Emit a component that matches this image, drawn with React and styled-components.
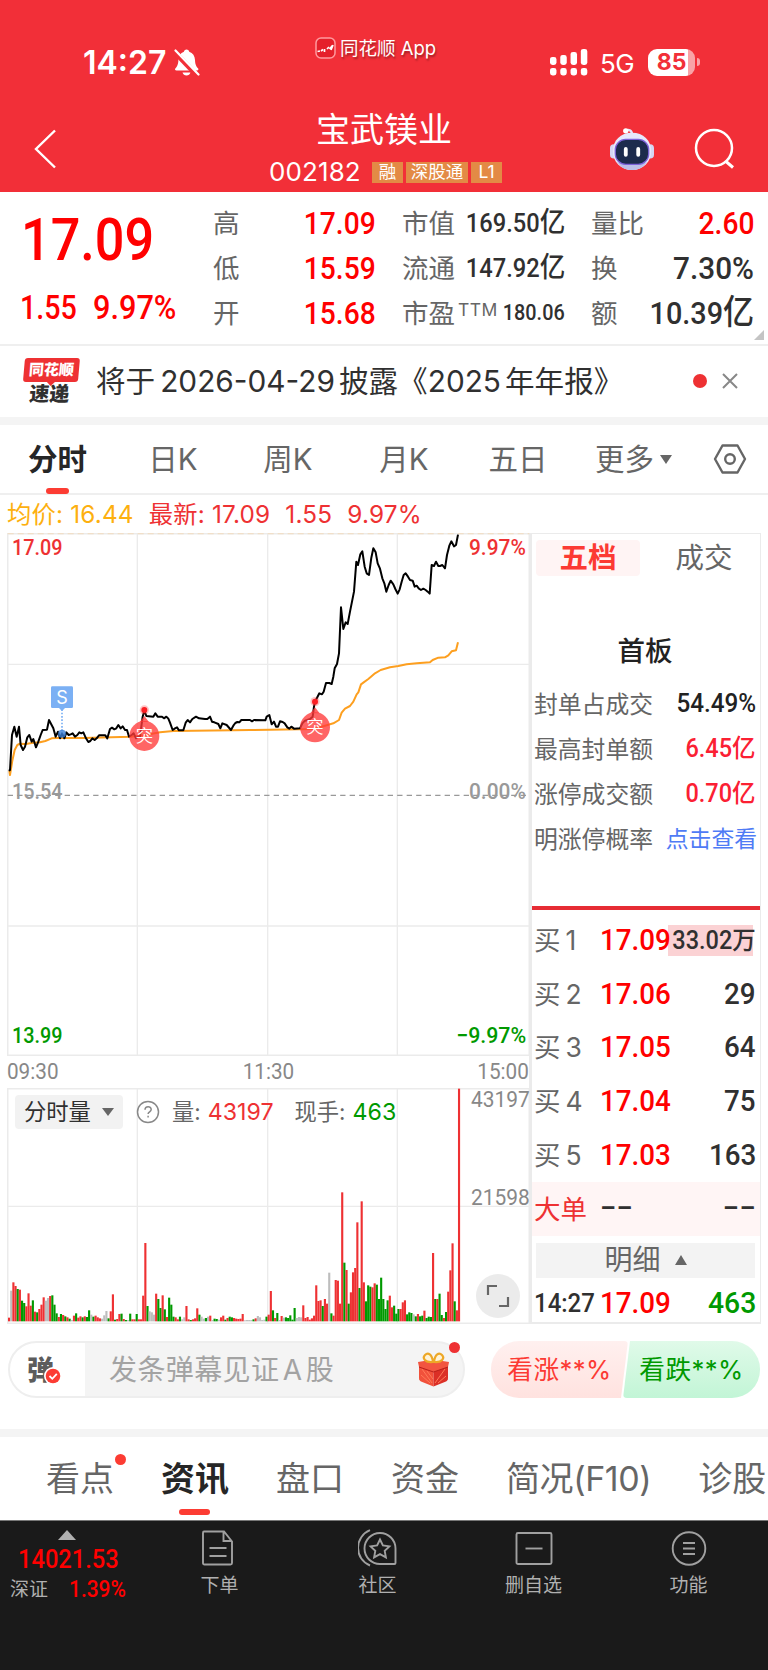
import React from 'react';
import styled, { createGlobalStyle, css } from 'styled-components';

const GlobalStyle = createGlobalStyle`
  * {
    box-sizing: border-box;
  }

  body {
    margin: 0;
    background: #fff;
    font-family: Inter, "Noto Sans CJK SC", sans-serif;
    color: #303030;
  }
`;

const RED = '#ff0000';
const SOFT_RED = '#ee3133';
const GREEN = '#009900';
const DARK = '#303030';
const GREY = '#666';
const LINE = '#ebebeb';

/* ---------- data ---------- */

const quoteRows = [
  [
    { label: '高', value: '17.09', color: RED, size: 32 },
    { label: '市值', value: '169.50', unit: '亿', size: 26, squeeze: 0.91 },
    { label: '量比', value: '2.60', color: RED, size: 32 },
  ],
  [
    { label: '低', value: '15.59', color: RED, size: 32 },
    { label: '流通', value: '147.92', unit: '亿', size: 26, squeeze: 0.91 },
    { label: '换', value: '7.30%', size: 32, squeeze: 0.93 },
  ],
  [
    { label: '开', value: '15.68', color: RED, size: 32 },
    { label: '市盈', sup: 'TTM', value: '180.06', size: 22, squeeze: 0.9 },
    { label: '额', value: '10.39', unit: '亿', size: 32, squeeze: 0.9 },
  ],
];

const periods = [
  { text: '分时', width: 115, active: true },
  { text: '日K', width: 116 },
  { text: '周K', width: 114 },
  { text: '月K', width: 118 },
  { text: '五日', width: 110 },
];

const limitStats = [
  { label: '封单占成交', value: '54.49%', color: '#222', squeeze: 0.97 },
  { label: '最高封单额', value: '6.45亿', color: '#fb2033', squeeze: 0.94 },
  { label: '涨停成交额', value: '0.70亿', color: '#fb2033', squeeze: 0.94 },
  { label: '明涨停概率', value: '点击查看', link: true },
];

const bids = [
  { level: 1, price: '17.09', amount: '33.02万', filled: true },
  { level: 2, price: '17.06', amount: '29' },
  { level: 3, price: '17.05', amount: '64' },
  { level: 4, price: '17.04', amount: '75' },
  { level: 5, price: '17.03', amount: '163' },
];

const newsTabs = [
  { text: '看点', dot: true },
  { text: '资讯', active: true },
  { text: '盘口' },
  { text: '资金' },
  { text: '简况(F10)', tight: true },
  { text: '诊股' },
];

const pricePoints = `26,752 30,750 36,645 43,620 50,650 57,620 62,675 69,690 75,680 82,652 88,645 95,665 100,657
  108,682 115,665 122,645 128,630 141,629 147,600 160,625 167,650 174,635 180,655 186,640 193,655 199,637 206,645
  212,643 218,640 225,650 232,645 238,637 244,640 250,637 258,655 265,666 271,663 277,655 284,660 290,655 297,646
  316,646 322,655 330,627 336,623 343,628 349,625 355,615 362,625 368,619 375,630 381,630 387,650 395,645 401,640
  408,655 414,650 420,650 428,590 433,572 439,588 460,590 466,580 473,590 486,590 492,595 499,590 505,596 510,608
  518,630 525,625 531,622 537,631 550,631 557,608 563,600 570,607 577,597 588,590 597,595 615,597 622,597 630,590
  636,605 643,607 655,612 661,625 667,610 680,615 693,630 700,617 706,609 712,606 718,607 724,600 750,600 756,604
  762,600 796,601 800,590 808,585 815,613 822,605 828,620 834,620 840,604 848,606 854,610 862,622 868,626 874,620
  882,626 900,625 907,610 915,602 922,600 930,597 938,590 942,560 945,545 958,520 966,523 971,515 978,489 988,489
  995,492 1000,470 1004,445 1011,432 1017,400 1023,262 1030,327 1037,307 1043,312 1050,275 1062,215 1069,125
  1074,135 1081,103 1087,94 1094,140 1100,160 1107,165 1114,113 1120,85 1127,97 1133,130 1140,146 1147,175
  1153,190 1159,215 1166,195 1172,182 1180,193 1186,207 1193,221 1199,208 1205,185 1211,165 1217,160 1224,170
  1230,180 1238,182 1244,200 1250,197 1256,205 1263,210 1270,206 1277,210 1283,215 1289,221 1295,135 1302,138
  1308,125 1315,138 1320,138 1327,135 1335,145 1341,105 1348,77 1354,64 1362,79 1368,75 1374,44`;

const averagePoints = `28,752 30,765 37,722 44,690 52,675 60,671 77,672 100,668 120,667 136,663 155,655 170,654
  250,654 390,650 433,646 480,637 520,633 700,631 750,630 810,629 900,628 940,627 975,617 1000,610 1017,600
  1025,578 1035,566 1050,558 1060,545 1070,523 1075,517 1083,493 1090,488 1105,477 1125,460 1142,450 1170,442
  1195,438 1220,433 1250,430 1290,427 1298,420 1315,413 1335,412 1345,406 1355,394 1368,391 1374,367`;

// one entry per minute: r = up, g = down, x = flat
const volumes = `r11 x92 r117 r106 g97 r95 g62 g55 r45 r84 r47 g63 r29 g27 r37 r50 r72 x62 x70 r76 g78 g50 g24 r13
  g22 r19 g15 r12 g8 x4 r17 g24 r11 r15 g12 r15 g13 g33 x20 g14 r17 r12 r9 x8 x18 x31 g9 r30 r81 g5 r7 r22 g23 r7
  g4 x4 g23 r6 r6 g22 r6 r6 r77 r235 g46 x30 x27 x20 r83 g67 g40 r78 g36 r13 g71 g50 g14 r12 r6 g14 x6 x12 r46 r6
  g4 r6 r9 r39 g20 x14 x8 g10 x14 r17 x4 g8 g7 x5 r12 r17 g5 r10 g14 g12 r10 r8 r7 r8 r22 x3 x4 x4 x4 g6 r9 x16
  x12 x4 x5 g14 r20 r91 g33 r10 g25 x4 r16 x11 g12 g10 g18 g5 g40 x10 x13 x12 r48 r10 r13 r5 r9 r17 r108 r61 r63
  g46 r67 r53 x146 g24 r17 r124 r122 r53 r387 g176 r154 g53 r87 r147 r160 r297 g100 r360 r117 g60 g108 g104 r102
  r114 g110 g67 g131 g67 g37 g63 r77 r42 g47 g23 g37 r37 r57 r63 g21 g27 g25 x21 g15 r22 g15 g17 r32 g10 g14 g13
  r205 g67 r67 g83 g19 r10 g28 r89 r153 r234 g60 r33 r698`.split(/\s+/);

const volumeColors = { r: '#ee3133', g: '#009900', x: '#bdbdbd' };

/* ---------- shared ---------- */

const Screen = styled.div`
  width: 768px;
  height: 1670px;
  overflow: hidden;
  display: flex;
  flex-direction: column;
`;

// narrow numerals, squeezed towards the side they are aligned to
const Num = styled.span`
  display: inline-block;
  flex: none;
  font-family: Roboto, "Noto Sans CJK SC", sans-serif;
  font-weight: ${({ $weight }) => $weight || 500};
  font-size: ${({ $size }) => $size}px;
  line-height: 1;
  color: ${({ $color }) => $color || DARK};
  white-space: nowrap;
  transform: scaleX(${({ $squeeze }) => $squeeze || 0.88});
  transform-origin: ${({ $from }) => $from || 'left'} center;
`;

const Dot = styled.i`
  flex: none;
  width: ${({ $size }) => $size}px;
  height: ${({ $size }) => $size}px;
  border-radius: 50%;
  background: ${SOFT_RED};
`;

const Band = styled.div`
  flex: none;
  height: 8px;
  background: #f4f4f4;
`;

/* ---------- header ---------- */

const Header = styled.header`
  flex: none;
  height: 192px;
  background: #f22f38;
  color: #fff;
`;

const StatusBar = styled.div`
  height: 104px;
  padding: 36px 68px 0 83px;
  display: flex;
  justify-content: space-between;
`;

const Clock = styled.div`
  width: 232px;
  height: 52px;
  display: flex;
  align-items: center;
  gap: 7px;
  font-size: 32px;
  font-weight: 600;
`;

const AppTag = styled.div`
  height: 24px;
  display: flex;
  align-items: center;
  gap: 4px;
  font-size: 18.5px;
  line-height: 24px;
  text-shadow: 1px 2px 2px rgba(0, 0, 0, 0.35);
`;

const Signals = styled.div`
  width: 150px;
  height: 52px;
  margin-left: auto;
  display: flex;
  align-items: center;
  font-size: 26px;
`;

const Network = styled.span`
  margin: 2px 14px 0 12px;
  letter-spacing: -0.5px;
`;

const Battery = styled.div`
  width: 47px;
  height: 27px;
  border-radius: 9px;
  background: linear-gradient(90deg, #fff 86%, #f9a3a7 86%);
  color: #f22f38;
  font-size: 23px;
  font-weight: 700;
  line-height: 27px;
  text-align: center;
`;

const BatteryCap = styled.i`
  width: 3px;
  height: 8px;
  margin-left: 2px;
  border-radius: 0 3px 3px 0;
  background: #f9a3a7;
`;

const NavBar = styled.div`
  height: 88px;
  display: grid;
  grid-template-columns: 200px 368px 200px;
`;

const BackCell = styled.div`
  padding: 25px 0 0 34px;
`;

const StockName = styled.h1`
  margin: 6px 0 0;
  font-size: 34px;
  font-weight: 400;
  line-height: 40px;
  text-align: center;
`;

const StockMeta = styled.div`
  margin-top: 8px;
  display: flex;
  align-items: center;
  padding-left: 69px;
`;

const StockCode = styled.span`
  width: 103px;
  font-size: 26px;
  line-height: 28px;
  letter-spacing: 0.1px;
`;

const Tag = styled.span`
  flex: none;
  width: ${({ $width }) => $width}px;
  height: 21px;
  margin-right: 3px;
  background: #e38a45;
  font-size: 17.5px;
  line-height: 20px;
  text-align: center;
`;

const NavActions = styled.div`
  display: flex;
  align-items: flex-start;
  padding-top: 23px;
  padding-left: 41px;
  gap: 39px;
`;

/* ---------- quote ---------- */

const Quote = styled.section`
  flex: none;
  height: 154px;
  border-bottom: 2px solid #efefef;
  display: flex;
  position: relative;
`;

const MainQuote = styled.div`
  width: 213px;
  padding: 18px 0 0 21px;
`;

const Change = styled.div`
  margin: 21px 0 0 -1px;
  display: flex;
  gap: 8px;
`;

const QuoteGrid = styled.div`
  flex: 1;
  padding: 9px 14px 10px 0;
  display: grid;
  grid-template-columns: 163px 163px 163px;
  grid-template-rows: repeat(3, 44.7px);
  column-gap: 26px;
`;

const QuoteCell = styled.div`
  display: flex;
  align-items: center;
  justify-content: space-between;
`;

const Label = styled.span`
  color: ${GREY};
  font-size: 26.5px;
  line-height: 40px;
  white-space: nowrap;

  sup {
    font-size: 17.5px;
    line-height: 0;
    letter-spacing: 0.5px;
    vertical-align: 7px;
    margin: 0 -10px 0 3px;
  }
`;

const Unit = styled.span`
  font-size: 1.08em;
`;

const Corner = styled.i`
  position: absolute;
  right: 4px;
  bottom: 4px;
  border-left: 10px solid transparent;
  border-bottom: 10px solid #c4c4c4;
`;

/* ---------- notice ---------- */

const Notice = styled.section`
  flex: none;
  height: 71px;
  padding: 0 28px 2px 23px;
  display: flex;
  align-items: center;
`;

const Express = styled.div`
  flex: none;
  width: 55px;
  height: 46px;
  margin-right: 18px;
  transform: skewX(-5deg);
  text-align: center;
  font-weight: 900;
`;

const ExpressTop = styled.div`
  height: 24px;
  border-radius: 3px;
  background: ${SOFT_RED};
  color: #fff;
  font-size: 15px;
  line-height: 23px;
`;

const ExpressTip = styled.div`
  width: 0;
  margin: 0 auto;
  border: 4px solid transparent;
  border-top: 4px solid ${SOFT_RED};
  border-bottom: 0;
`;

const ExpressBottom = styled.div`
  font-size: 20px;
  line-height: 17px;
`;

const NoticeText = styled.span`
  flex: 1;
  font-size: 29.6px;
  line-height: 40px;
  white-space: nowrap;

  b {
    font-weight: 400;
    font-size: 29.8px;
    margin: 0 4px 0 5px;
  }

  b.year {
    margin-left: 0;
  }
`;

/* ---------- period tabs ---------- */

const PeriodTabs = styled.nav`
  flex: none;
  height: 70px;
  border-bottom: 2px solid #efefef;
  display: flex;
  align-items: center;
  font-size: 29.5px;
  line-height: 60px;
  color: ${GREY};
`;

const Period = styled.span`
  flex: none;
  width: ${({ $width }) => $width}px;
  height: 69px;
  line-height: 68px;
  text-align: center;
  position: relative;

  ${({ $active }) => $active && css`
    color: #262626;
    font-weight: 700;

    &::after {
      content: '';
      position: absolute;
      left: 46px;
      bottom: 0;
      width: 23px;
      height: 6px;
      border-radius: 3px;
      background: #fc3c33;
    }
  `}
`;

const MorePeriod = styled.span`
  width: 140px;
  padding-left: 22px;
  display: flex;
  align-items: center;
  gap: 6px;
`;

const Caret = styled.i`
  border: ${({ $w }) => $w}px solid transparent;
  ${({ $up, $w, $h, $color }) => ($up
    ? `border-top: 0; border-bottom: ${$h}px solid ${$color || GREY};`
    : `border-bottom: 0; border-top: ${$h}px solid ${$color || GREY};`)}
`;

/* ---------- chart ---------- */

const Summary = styled.div`
  flex: none;
  height: 38px;
  padding: 0 7px;
  display: flex;
  font-size: 24.3px;
  line-height: 39px;
  color: ${SOFT_RED};
  letter-spacing: 0.2px;

  span {
    margin-right: 15px;
  }

  span:first-child {
    color: #fdb00f;
  }
`;

const Market = styled.section`
  flex: none;
  height: 791px;
  margin: 0 7px;
  display: flex;
`;

const Charts = styled.div`
  flex: none;
  width: 522px;
`;

const PriceChart = styled.div`
  height: 523px;
  position: relative;

  svg {
    display: block;
  }
`;

const AxisLabel = styled(Num)`
  position: absolute;
  ${({ $from, $edge }) => ($from === 'right' ? `right: ${$edge ?? 3}px;` : 'left: 5px;')}
  top: ${({ $top }) => $top}px;
`;

const Times = styled.div`
  height: 32px;
  display: flex;
  align-items: center;
  justify-content: space-between;
`;

const VolumeChart = styled.div`
  height: 236px;
  position: relative;

  svg {
    display: block;
  }
`;

const VolumeHead = styled.div`
  position: absolute;
  left: 8px;
  top: 7px;
  display: flex;
  align-items: center;
  font-size: 22.3px;
  line-height: 34px;
  color: ${GREY};
  white-space: nowrap;
`;

const VolumeSelect = styled.span`
  width: 108px;
  height: 34px;
  margin-right: 13px;
  padding-left: 9px;
  display: flex;
  align-items: center;
  gap: 11px;
  border-radius: 4px;
  background: #f2f2f2;
  color: ${DARK};
`;

const VolumeLabel = styled.span`
  margin-left: ${({ $gap }) => $gap}px;
`;

const VolumeValue = styled.span`
  margin-left: 7px;
  font-size: 23.2px;
  color: ${({ $color }) => $color};
`;

const Expand = styled.span`
  position: absolute;
  right: 9px;
  bottom: 6px;
  width: 44px;
  height: 44px;
  border-radius: 50%;
  background: #ebebeb;
  display: flex;
  align-items: center;
  justify-content: center;
`;

/* ---------- order book ---------- */

const Book = styled.div`
  width: 232px;
  border: 1px solid ${LINE};
  border-left-width: 3px;
  border-bottom-width: 2px;
  display: flex;
  flex-direction: column;
`;

const BookTabs = styled.div`
  flex: none;
  height: 47px;
  padding: 6px 0 0 4px;
  display: flex;
`;

const BookTab = styled.span`
  flex: none;
  width: 104px;
  height: 36px;
  margin-right: 12px;
  border-radius: 4px;
  font-size: 28.5px;
  line-height: 36px;
  text-align: center;
  color: ${GREY};

  ${({ $active }) => $active && css`
    background: #fff4f4;
    color: #fc3a33;
    font-weight: 700;
  `}
`;

const BoardTitle = styled.h2`
  flex: none;
  margin: 49px 2px 8px 0;
  font-size: 27.5px;
  font-weight: 500;
  line-height: 43px;
  text-align: center;
  color: #222;
`;

const StatRow = styled.div`
  flex: none;
  height: 45.2px;
  padding: 0 4px 0 2px;
  display: flex;
  align-items: center;
  justify-content: space-between;
  font-size: 23.8px;
  color: ${GREY};
  white-space: nowrap;
`;

const StatLabel = styled.span`
  margin-top: -3px;
`;

const Link = styled.span`
  margin: -3px -1px 0 0;
  font-size: 22.8px;
  color: #4f7bf5;
`;

const BookDivider = styled.div`
  flex: none;
  height: 4px;
  margin-top: 44px;
  margin-bottom: 4px;
  background: #e62c34;
`;

const BookRow = styled.div`
  flex: none;
  height: 53.7px;
  padding: 0 4px 0 2px;
  display: grid;
  grid-template-columns: 66px minmax(0, 1fr) auto;
  align-items: center;
  font-size: 26.5px;
  line-height: 36px;
  color: ${({ $color }) => $color || GREY};
  white-space: nowrap;
  ${({ $tint }) => $tint && `background: ${$tint};`}
  ${({ $filled }) => $filled && css`
    background: linear-gradient(#fbd2d4, #fbd2d4) 136px 11px / 85px 31px no-repeat;
  `}
`;

const TradeRow = styled(BookRow)`
  height: 44px;
  padding-top: 8px;
`;

const Level = styled.span`
  display: flex;
  align-items: center;
  gap: 5px;
  margin-top: -1px;
`;

const Detail = styled.div`
  flex: none;
  height: 35px;
  margin: 7px 5px 0 4px;
  display: flex;
  align-items: center;
  justify-content: center;
  gap: 14px;
  background: #f3f3f3;
  font-size: 28px;
  line-height: 35px;
  color: ${GREY};
`;

/* ---------- comment bar ---------- */

const CommentBar = styled.section`
  flex: none;
  height: 105px;
  padding: 17px 8px 0;
  display: flex;
  align-items: flex-start;
`;

const Bullet = styled.div`
  flex: none;
  width: 457px;
  height: 57px;
  margin-right: 26px;
  border: 2px solid #eee;
  border-radius: 29px;
  background: linear-gradient(90deg, #fff 75px, #f4f4f4 75px);
  display: flex;
  align-items: center;
  position: relative;
`;

const BulletMark = styled.span`
  width: 82px;
  padding: 0 0 2px 17px;
  display: flex;
  font-size: 27px;
  font-weight: 900;
  color: #5c5c5c;

  svg {
    margin: 18px 0 0 -10px;
  }
`;

const Placeholder = styled.span`
  flex: 1;
  padding-left: 17px;
  font-size: 28px;
  line-height: 52px;
  letter-spacing: 0.4px;
  word-spacing: -5px;
  color: #a3a3a3;
`;

const BulletDot = styled(Dot)`
  position: absolute;
  right: 3px;
  top: -1px;
`;

const Gift = styled.svg`
  margin-right: 13px;
`;

const Vote = styled.span`
  flex: none;
  width: 137px;
  height: 57px;
  padding-bottom: 4px;
  display: flex;
  align-items: center;
  justify-content: center;
  font-size: 25.7px;
  letter-spacing: 0.4px;
  white-space: nowrap;

  ${({ $up }) => ($up ? css`
    border-radius: 28px 4px 4px 28px;
    background: linear-gradient(#fff0ef, #ffe2df);
    clip-path: polygon(0 0, 100% 0, 130px 100%, 0 100%);
    color: #fc3a33;
  ` : css`
    margin-left: -5px;
    border-radius: 4px 28px 28px 4px;
    background: linear-gradient(#e0fae9, #c2f5d6);
    clip-path: polygon(7px 0, 100% 0, 100% 100%, 0 100%);
    color: ${GREEN};
  `)}
`;

/* ---------- bottom ---------- */

const NewsTabs = styled.nav`
  flex: none;
  height: 83px;
  padding-left: 46px;
  display: flex;
  gap: 47px;
  overflow: hidden;
`;

const NewsTab = styled.span`
  flex: none;
  height: 83px;
  font-size: 34px;
  line-height: 84px;
  letter-spacing: ${({ $tight }) => ($tight ? '-0.4px' : 'normal')};
  white-space: nowrap;
  color: ${GREY};
  position: relative;

  ${({ $active }) => $active && css`
    font-weight: 700;
    color: #262626;

    &::after {
      content: '';
      position: absolute;
      left: 18px;
      bottom: 5px;
      width: 31px;
      height: 6px;
      border-radius: 3px;
      background: #fc3c33;
    }
  `}
`;

const TabDot = styled(Dot)`
  position: absolute;
  right: -12px;
  top: 17px;
  background: #fc3c33;
`;

const BottomBar = styled.footer`
  flex: 1;
  border-top: 1px solid #777;
  background: #1a1a1a;
  color: #b0b0b0;
  display: grid;
  grid-template-columns: 140px 159px 157px 155px 155px;
  align-items: start;
`;

const IndexBox = styled.div`
  padding: 9px 0 0 10px;
  display: flex;
  flex-direction: column;
`;

const IndexCaret = styled(Caret)`
  width: 0;
  margin-left: 48px;
`;

const IndexLine = styled.div`
  margin-top: 6px;
  display: flex;
  align-items: center;
  gap: 21px;
  font-size: 19px;
  line-height: 24px;
`;

const IndexValue = styled(Num)`
  margin: 6px 0 0 8px;
`;

const Action = styled.div`
  padding-top: 8px;
  display: flex;
  flex-direction: column;
  align-items: center;
  gap: 5px;
  font-size: 19px;
  line-height: 28px;
`;

/* ---------- icons ---------- */

const BellOff = () => (
  <svg width="27" height="29" viewBox="0 0 27 29">
    <path
      d="M13.5 1.500c1.600 0 2.500 1 2.700 2.200 3.700 1.200 5.600 4.300 5.800 8.200.2 5 1.400 6.300 3 8.400.9 1.200.3 2.200-1 2.200H3.500c-1.400 0-2-1-1-2.200 1.500-2 2.700-3.400 2.900-8.400.2-3.900 2-7 5.500-8.200.3-1.200 1.200-2.200 2.600-2.200z"
      fill="#fff"
    />
    <path d="M9.500 24.500h8c-.6 2-2 3-4 3s-3.400-1-4-3z" fill="#fff" />
    <path d="M1 3.500l23 24" stroke="#f22f38" strokeWidth="5" />
    <path d="M2.500 2.500l23 24" stroke="#fff" strokeWidth="2.200" strokeLinecap="round" />
  </svg>
);

const AppLogo = () => (
  <svg width="21" height="22" viewBox="0 0 21 22">
    <rect x="1" y="1" width="19" height="20" rx="5" fill="#e5202b" stroke="#ff9a9e" strokeWidth="1.500" />
    <path d="M2.500 14.500l2.500-.5M6 14l2-1.500M9.500 12v3M12 12l2-2M14.500 12l3-3.500M16 13l2-5" stroke="#fff" strokeWidth="1.700" fill="none" />
  </svg>
);

const Bars = () => (
  <svg width="38" height="27" viewBox="0 0 38 27" fill="#fff">
    {[8, 6, 3, 0].map((top, i) => (
      <React.Fragment key={top}>
        <rect x={i * 10.300} y={top} width="6.500" height={16 - top} rx="2.500" />
        <rect x={i * 10.300} y="19" width="6.500" height="7.500" rx="2.500" />
      </React.Fragment>
    ))}
  </svg>
);

const Robot = () => (
  <svg width="46" height="44" viewBox="0 0 48 46">
    <path d="M17 4c3-2 7-1 7 4" stroke="#e4e6fb" strokeWidth="2.500" fill="none" />
    <circle cx="17.500" cy="4" r="2.800" fill="#fff" />
    <rect x="1" y="18" width="8" height="15" rx="4" fill="#d5d6f3" />
    <rect x="39" y="18" width="8" height="15" rx="4" fill="#d5d6f3" />
    <path d="M24 6c12 0 20 8 20 19S36 45 24 45 4 36 4 25 12 6 24 6z" fill="#e6e8fb" />
    <path d="M8 36c4 6 9 9 16 9s12-3 16-9c-4 4-28 4-32 0z" fill="#bcbfe8" />
    <rect x="6.500" y="13" width="35" height="26" rx="11" fill="#1c2b4d" stroke="#7d62d9" strokeWidth="1.300" />
    <rect x="15.500" y="21" width="4" height="10" rx="2" fill="#fff" />
    <rect x="28.500" y="21" width="4" height="10" rx="2" fill="#fff" />
  </svg>
);

const GiftIcon = () => (
  <Gift width="33" height="36" viewBox="0 0 33 36">
    <path d="M2 13v13c0 2 1 3 2 3.500l12.500 5V17z" fill="#f1513b" />
    <path d="M31 13v13c0 2-1 3-2 3.500l-12.500 5V17z" fill="#db2f26" />
    <path d="M1 10l15-2.500L32 10l-1 5-14.500 5L2 15z" fill="#f25540" />
    <path d="M2 15l14.500 5L31 15" stroke="#b91f1a" fill="none" />
    <path d="M5 17l10 14M4 23l9 8M10 19l6 8M28 17L18 31M29 24l-8 7" stroke="#ff7a58" strokeWidth="1" fill="none" />
    <path d="M16 10C8 11 5 6 8 3s7-1 8 7zM17 10c8 1 11-4 8-7s-7-1-8 7z" fill="#fff3d6" stroke="#eda827" strokeWidth="2.200" />
  </Gift>
);

const Marker = ({ x, y, dotY }) => (
  <g>
    <path d={`M${x - 14} ${y - 42}L${x} ${y - 60}L${x + 14} ${y - 42}z`} fill="#ff3a3a" fillOpacity="0.78" />
    <circle cx={x} cy={y} r="45" fill="#ff3a3a" fillOpacity="0.78" />
    <circle cx={x} cy={dotY} r="14" fill="#ff3a3a" fillOpacity="0.3" />
    <circle cx={x} cy={dotY} r="9" fill="#fb1f24" />
    <text x={x} y={y + 18} fontSize="52" fontWeight="350" fontFamily="Noto Sans CJK SC" fill="#fff" textAnchor="middle">突</text>
  </g>
);

const PriceLines = () => (
  <svg width="523" height="523" viewBox="21 39 1569 1569" fill="none">
    <g stroke={LINE} strokeWidth="4">
      <path d="M412 41V1606M803 41V1606M1192 41V1606M23 433H1588M23 1218H1588" strokeWidth="4" />
      <path d="M23 41V1606H1588V41z" strokeWidth="5" />
    </g>
    <path d="M23 40H1588" stroke="#f1dfc8" strokeWidth="5" strokeDasharray="18 12" />
    <path d="M23 826H1586" stroke="#999" strokeWidth="4" strokeDasharray="16 12.500" />
    <polyline points={averagePoints} stroke="#fd9f1f" strokeWidth="6" strokeLinejoin="round" />
    <polyline points={pricePoints} stroke="#000" strokeWidth="6" strokeLinejoin="round" />
    <path d="M186 568V640" stroke="#7bb0f4" strokeWidth="5" strokeDasharray="5 5" />
    <circle cx="186" cy="641" r="12" fill="#3b80d8" fillOpacity="0.8" />
    <path d="M157 499h58q4 0 4 4v57q0 4-4 4h-20l-9 9-9-9h-20q-4 0-4-4v-57q0-4 4-4z" fill="#7bb0f4" />
    <text x="186" y="551" fontSize="54" fontFamily="Inter" fill="#fff" textAnchor="middle">S</text>
    <Marker x={433} y={648} dotY={570} />
    <Marker x={945} y={622} dotY={545} />
  </svg>
);

const VolumeBars = () => (
  <svg width="523" height="236" viewBox="21 204 1569 708" fill="none">
    <path d="M412 206V912M803 206V912M1192 206V912M23 559H1588" stroke={LINE} strokeWidth="4" />
    <path d="M23 206V910H1588V206z" stroke={LINE} strokeWidth="5" />
    {volumes.map((v, i) => {
      const height = Number(v.slice(1));
      return (
        <rect key={i} x={24 + i * 6.490} y={904 - height} width="6.400" height={height} fill={volumeColors[v[0]]} />
      );
    })}
  </svg>
);

/* ---------- page ---------- */

const App = () => (
  <Screen>
    <GlobalStyle />

    <Header>
      <StatusBar>
        <Clock>14:27<BellOff /></Clock>
        <AppTag><AppLogo />同花顺 App</AppTag>
        <Signals>
          <Bars />
          <Network>5G</Network>
          <Battery>85</Battery>
          <BatteryCap />
        </Signals>
      </StatusBar>
      <NavBar>
        <BackCell>
          <svg width="23" height="40" viewBox="0 0 23 40">
            <path d="M21 1.500L2 20l19 18.500" stroke="#fff" strokeWidth="2.400" fill="none" />
          </svg>
        </BackCell>
        <div>
          <StockName>宝武镁业</StockName>
          <StockMeta>
            <StockCode>002182</StockCode>
            <Tag $width={31}>融</Tag>
            <Tag $width={62}>深股通</Tag>
            <Tag $width={31}>L1</Tag>
          </StockMeta>
        </div>
        <NavActions>
          <Robot />
          <svg width="42" height="42" viewBox="0 0 42 42" fill="none" stroke="#fff" strokeWidth="2.500">
            <circle cx="20" cy="21" r="18" />
            <path d="M32 34.500l7 6" strokeWidth="3" />
          </svg>
        </NavActions>
      </NavBar>
    </Header>

    <Quote>
      <MainQuote>
        <Num $size={60} $squeeze={0.87} $color={RED}>17.09</Num>
        <Change>
          <Num $size={33} $squeeze={0.87} $color={RED}>1.55</Num>
          <Num $size={33} $squeeze={0.93} $color={RED}>9.97%</Num>
        </Change>
      </MainQuote>
      <QuoteGrid>
        {quoteRows.flat().map((cell) => (
          <QuoteCell key={cell.label}>
            <Label>{cell.label}{cell.sup && <sup>{cell.sup}</sup>}</Label>
            <Num $size={cell.size} $color={cell.color} $squeeze={cell.squeeze} $from="right">
              {cell.value}{cell.unit && <Unit>{cell.unit}</Unit>}
            </Num>
          </QuoteCell>
        ))}
      </QuoteGrid>
      <Corner />
    </Quote>

    <Notice>
      <Express>
        <ExpressTop>同花顺</ExpressTop>
        <ExpressTip />
        <ExpressBottom>速递</ExpressBottom>
      </Express>
      <NoticeText>将于<b>2026-04-29</b>披露《<b className="year">2025</b>年年报》</NoticeText>
      <Dot $size={14} />
      <svg width="33" height="16" viewBox="-17 0 33 16" stroke="#888" strokeWidth="2">
        <path d="M-1 1l14 14M13 1l-14 14" />
      </svg>
    </Notice>

    <Band />

    <PeriodTabs>
      {periods.map((p) => (
        <Period key={p.text} $width={p.width} $active={p.active}>{p.text}</Period>
      ))}
      <MorePeriod>更多<Caret $w={6} $h={9} /></MorePeriod>
      <svg width="34" height="30" viewBox="0 0 34 30" fill="none" stroke={GREY} strokeWidth="2.400">
        <path d="M9.500 1.500h15l7.500 13.500-7.500 13.500h-15L2 15z" strokeLinejoin="round" />
        <circle cx="17" cy="15" r="4.800" />
      </svg>
    </PeriodTabs>

    <Summary>
      <span>均价: 16.44</span>
      <span>最新: 17.09</span>
      <span>1.55</span>
      <span>9.97%</span>
    </Summary>

    <Market>
      <Charts>
        <PriceChart>
          <PriceLines />
          <AxisLabel $size={22} $squeeze={0.9} $color={SOFT_RED} $top={4}>17.09</AxisLabel>
          <AxisLabel $size={22} $squeeze={0.95} $color={SOFT_RED} $top={4} $from="right">9.97%</AxisLabel>
          <AxisLabel $size={22} $squeeze={0.9} $color="#999" $top={248}>15.54</AxisLabel>
          <AxisLabel $size={22} $squeeze={0.95} $color="#999" $top={248} $from="right">0.00%</AxisLabel>
          <AxisLabel $size={22} $squeeze={0.9} $color={GREEN} $top={492}>13.99</AxisLabel>
          <AxisLabel $size={22} $squeeze={0.97} $color={GREEN} $top={492} $from="right">−9.97%</AxisLabel>
        </PriceChart>
        <Times>
          <Num $size={22} $squeeze={0.94} $weight={400} $color="#888">09:30</Num>
          <Num $size={22} $squeeze={0.94} $weight={400} $color="#888" $from="center">11:30</Num>
          <Num $size={22} $squeeze={0.94} $weight={400} $color="#888" $from="right">15:00</Num>
        </Times>
        <VolumeChart>
          <VolumeBars />
          <VolumeHead>
            <VolumeSelect>分时量<Caret $w={6} $h={8} /></VolumeSelect>
            <svg width="24" height="24" viewBox="0 0 24 24" fill="none" stroke="#888" strokeWidth="1.500">
              <circle cx="12" cy="12" r="10.500" />
              <path d="M9 9.800c0-4 6.200-4 6.200-.3 0 2.300-3.100 2.300-3.100 4.500M12.100 15.800v1.800" />
            </svg>
            <VolumeLabel $gap={12}>量:</VolumeLabel>
            <VolumeValue $color={SOFT_RED}>43197</VolumeValue>
            <VolumeLabel $gap={21}>现手:</VolumeLabel>
            <VolumeValue $color={GREEN}>463</VolumeValue>
          </VolumeHead>
          <AxisLabel $size={22} $squeeze={0.95} $weight={400} $color="#888" $top={1} $edge={-1} $from="right">43197</AxisLabel>
          <AxisLabel $size={22} $squeeze={0.95} $weight={400} $color="#888" $top={99} $edge={-1} $from="right">21598</AxisLabel>
          <Expand>
            <svg width="24" height="24" viewBox="0 0 24 24" fill="none" stroke={GREY} strokeWidth="2.200">
              <path d="M2 11V2h9M22 13v9h-9" />
            </svg>
          </Expand>
        </VolumeChart>
      </Charts>

      <Book>
        <BookTabs>
          <BookTab $active>五档</BookTab>
          <BookTab>成交</BookTab>
        </BookTabs>
        <BoardTitle>首板</BoardTitle>
        {limitStats.map((s) => (
          <StatRow key={s.label}>
            <StatLabel>{s.label}</StatLabel>
            {s.link
              ? <Link>{s.value}</Link>
              : <Num $size={25} $squeeze={s.squeeze} $color={s.color} $from="right">{s.value}</Num>}
          </StatRow>
        ))}
        <BookDivider />
        {bids.map((b) => (
          <BookRow key={b.level} $filled={b.filled}>
            <Level>买<span>{b.level}</span></Level>
            <Num $size={29.5} $squeeze={0.94} $color={RED}>{b.price}</Num>
            <Num $size={b.filled ? 25 : 29.5} $squeeze={0.94} $from="right">{b.amount}</Num>
          </BookRow>
        ))}
        <BookRow $color="#ee3133" $tint="#fff5f5">
          <Level>大单</Level>
          <Num $size={29.5} $squeeze={1}>−−</Num>
          <Num $size={29.5} $squeeze={1} $from="right">−−</Num>
        </BookRow>
        <Detail>明细<Caret $up $w={6.500} $h={10} /></Detail>
        <TradeRow>
          <Num $size={25} $squeeze={0.96}>14:27</Num>
          <Num $size={29.5} $squeeze={0.94} $color={RED}>17.09</Num>
          <Num $size={29.5} $squeeze={0.96} $color={GREEN} $from="right">463</Num>
        </TradeRow>
      </Book>
    </Market>

    <CommentBar>
      <Bullet>
        <BulletMark>
          弹
          <svg width="18" height="18" viewBox="0 0 18 18">
            <circle cx="9" cy="9" r="9" fill="#fff" />
            <circle cx="9" cy="9" r="7.300" fill="#fc3c33" />
            <path d="M5.500 9l2.800 2.800 4.500-5" stroke="#fff" strokeWidth="1.800" fill="none" />
          </svg>
        </BulletMark>
        <Placeholder>发条弹幕见证 A 股</Placeholder>
        <GiftIcon />
        <BulletDot $size={11} />
      </Bullet>
      <Vote $up>看涨**%</Vote>
      <Vote>看跌**%</Vote>
    </CommentBar>

    <Band />

    <NewsTabs>
      {newsTabs.map((t) => (
        <NewsTab key={t.text} $active={t.active} $tight={t.tight}>
          {t.text}
          {t.dot && <TabDot $size={11} />}
        </NewsTab>
      ))}
    </NewsTabs>

    <BottomBar>
      <IndexBox>
        <IndexCaret $up $w={9} $h={10} $color="#b0b0b0" />
        <IndexValue $size={26} $squeeze={0.91} $color={RED}>14021.53</IndexValue>
        <IndexLine>
          深证
          <Num $size={23.5} $squeeze={0.89} $color={RED}>1.39%</Num>
        </IndexLine>
      </IndexBox>
      <Action>
        <svg width="36" height="38" viewBox="0 0 36 38" fill="none" stroke="#a0a0a0" strokeWidth="1.900">
          <path d="M2 2.500h20l8 10v21.500q0 1.500-1.500 1.500h-26q-1.500 0-1.500-1.500v-30q0-1.500 1-1.500zM21.500 2.500v9.500h8.500M7.500 19h17M7.500 27h17" />
        </svg>
        下单
      </Action>
      <Action>
        <svg width="40" height="38" viewBox="0 0 40 38" fill="none" stroke="#a0a0a0" strokeWidth="1.900">
          <path d="M12 1.200A19 19 0 0 0 12 36.500" />
          <path d="M22 4a15.500 15.500 0 0 1 15.500 15.500V34q0 1-1 1H22a15.500 15.500 0 0 1 0-31z" />
          <path d="M22 10.500l2.900 6 6.500.9-4.700 4.500 1.200 6.500-5.900-3.200-5.900 3.200 1.200-6.500-4.700-4.500 6.500-.9z" />
        </svg>
        社区
      </Action>
      <Action>
        <svg width="38" height="38" viewBox="0 0 38 38" fill="none" stroke="#a0a0a0" strokeWidth="1.900">
          <rect x="1.500" y="4" width="35" height="31" rx="1.500" />
          <path d="M10.500 19.500h17" />
        </svg>
        删自选
      </Action>
      <Action>
        <svg width="38" height="38" viewBox="0 0 38 38" fill="none" stroke="#a0a0a0" strokeWidth="1.900">
          <circle cx="19" cy="19.500" r="16.300" />
          <path d="M13 14h12M13 19.500h12M13 25h12" />
        </svg>
        功能
      </Action>
    </BottomBar>
  </Screen>
);

export default App;
